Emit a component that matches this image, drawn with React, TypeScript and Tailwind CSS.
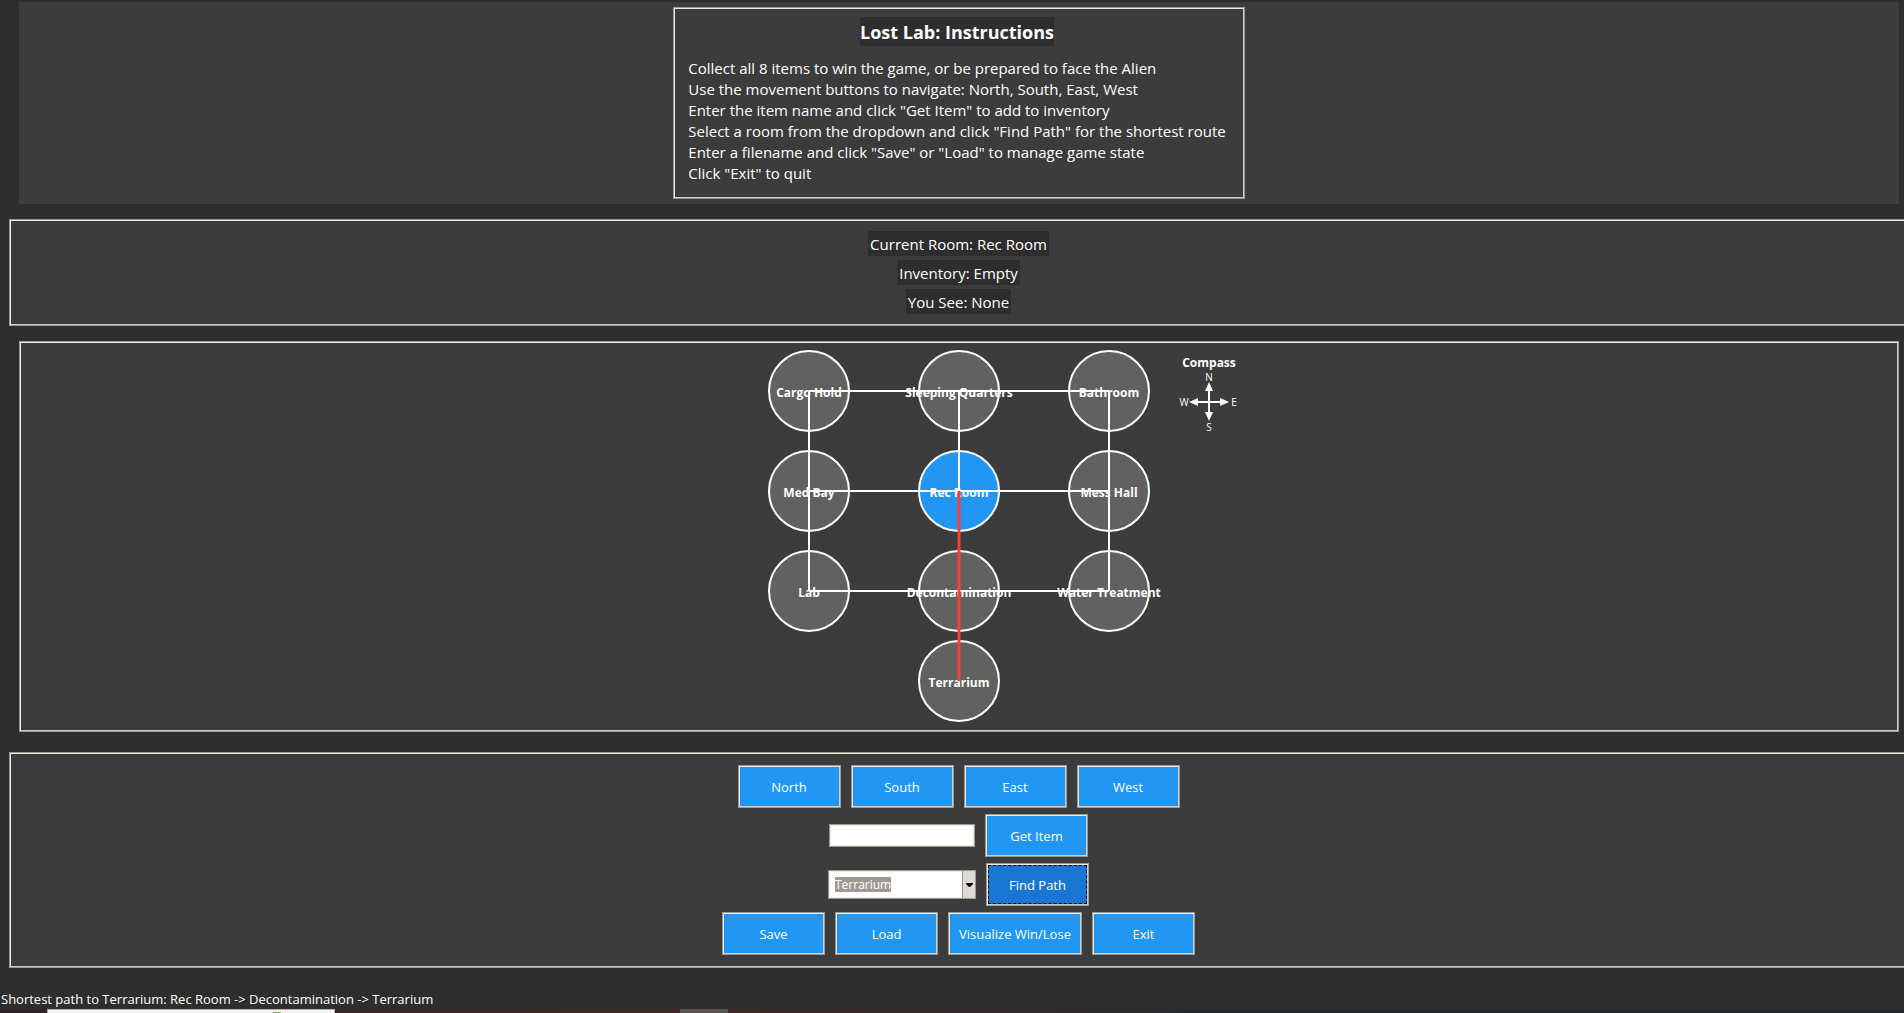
import type { ReactNode } from "react";

const INSTRUCTIONS = [
  "Collect all 8 items to win the game, or be prepared to face the Alien",
  "Use the movement buttons to navigate: North, South, East, West",
  'Enter the item name and click "Get Item" to add to inventory',
  'Select a room from the dropdown and click "Find Path" for the shortest route',
  'Enter a filename and click "Save" or "Load" to manage game state',
  'Click "Exit" to quit',
];

const STATUS = ["Current Room: Rec Room", "Inventory: Empty", "You See: None"];

const ROOMS = [
  { name: "Cargo Hold", x: 130, y: 48 },
  { name: "Sleeping Quarters", x: 280, y: 48 },
  { name: "Bathroom", x: 430, y: 48 },
  { name: "Med Bay", x: 130, y: 148 },
  { name: "Rec Room", x: 280, y: 148, current: true },
  { name: "Mess Hall", x: 430, y: 148 },
  { name: "Lab", x: 130, y: 248 },
  { name: "Decontamination", x: 280, y: 248 },
  { name: "Water Treatment", x: 430, y: 248 },
  { name: "Terrarium", x: 280, y: 338 },
];

const BEVEL =
  "border border-[#9e9a91] shadow-[inset_1px_1px_0_#eeebe7,inset_-1px_-1px_0_#cfcdc8]";

function GameButton({ children, focused = false }: { children: ReactNode; focused?: boolean }) {
  return (
    <button
      type="button"
      className={
        BEVEL +
        " h-[43px] min-w-[103px] px-[10px] text-[13px] leading-5 text-white " +
        (focused
          ? "bg-[#1976d2] outline-1 -outline-offset-3 outline-dashed outline-black"
          : "bg-[#2196f3]")
      }
    >
      {children}
    </button>
  );
}

function ShipMap() {
  return (
    <svg width="560" height="387" viewBox="0 0 560 387" className="shrink-0" role="img" aria-label="Ship map">
      <g stroke="#fff" strokeWidth="2">
        {ROOMS.map((r) => (
          <circle key={r.name} cx={r.x} cy={r.y} r="40" fill={r.current ? "#2196f3" : "#616161"} />
        ))}
      </g>
      <g fill="#fff" textAnchor="middle" className="text-[12px] font-bold">
        {ROOMS.map((r) => (
          <text key={r.name} x={r.x} y={r.y + 6}>
            {r.name}
          </text>
        ))}
        <text x="530" y="24">
          Compass
        </text>
      </g>
      <path
        d="M130 48H430M130 148H430M130 248H430M130 48V248M280 48V338M430 48V248"
        fill="none"
        stroke="#fff"
        strokeWidth="2"
      />
      <path d="M280 148V338" stroke="#f44336" strokeWidth="3" />
      <path d="M530 44V73M516 59H544" stroke="#fff" strokeWidth="2" />
      <path
        d="M530 39L534 48H526ZM530 78L534 69H526ZM510 59L519 55V63ZM550 59L541 55V63Z"
        fill="#fff"
      />
      <g fill="#fff" textAnchor="middle" className="text-[10px]">
        <text x="530" y="38">N</text>
        <text x="530" y="88">S</text>
        <text x="505" y="63">W</text>
        <text x="555" y="63">E</text>
      </g>
    </svg>
  );
}

export default function App() {
  return (
    <div className="flex min-h-screen flex-col overflow-hidden bg-[#2e2e2e] pt-[2px] font-['Open_Sans',sans-serif] text-white">
      <section className="mr-[5px] ml-[19px] flex justify-center bg-[#3c3c3c] py-[5px]">
        <div className={BEVEL + " flex flex-col items-center pt-[9px] pr-[18px] pb-[14px] pl-[14px]"}>
          <h1 className="bg-[#2e2e2e] pt-px text-[18px] leading-7 font-bold">Lost Lab: Instructions</h1>
          <div className="mt-3 self-stretch text-[15px] leading-[21px]">
            {INSTRUCTIONS.map((line) => (
              <p key={line}>{line}</p>
            ))}
          </div>
        </div>
      </section>

      <section
        className={BEVEL + " -mr-[4px] ml-[9px] mt-[15px] flex flex-col items-center gap-1 bg-[#3c3c3c] py-[11px]"}
      >
        {STATUS.map((line) => (
          <p key={line} className="bg-[#2e2e2e] px-[2px] pt-px text-[15px] leading-6">
            {line}
          </p>
        ))}
      </section>

      <section className={BEVEL + " mr-[5px] ml-[19px] mt-[15px] flex justify-center bg-[#3c3c3c] py-px"}>
        <ShipMap />
      </section>

      <section
        className={BEVEL + " -mr-[4px] ml-[9px] mt-5 flex flex-col items-center gap-[6px] bg-[#3c3c3c] py-3"}
      >
        <div className="flex gap-[10px]">
          <GameButton>North</GameButton>
          <GameButton>South</GameButton>
          <GameButton>East</GameButton>
          <GameButton>West</GameButton>
        </div>
        <div className="flex items-center gap-[10px]">
          <input
            type="text"
            aria-label="Item name"
            className="h-[23px] w-[146px] border border-[#9e9a91] bg-white px-1 text-[12px] text-black shadow-[inset_0_0_0_1px_#eeebe7]"
          />
          <GameButton>Get Item</GameButton>
        </div>
        <div className="flex items-center gap-[10px]">
          <div className="relative">
            <select
              aria-label="Destination room"
              defaultValue="Terrarium"
              className="block h-[29px] w-[148px] appearance-none border border-[#9e9a91] bg-white bg-[linear-gradient(#9e9a91,#9e9a91)] bg-[length:56px_15px] bg-[position:6px_6px] bg-no-repeat pr-4 pl-[6px] text-[12px] leading-[15px] text-white shadow-[inset_0_0_0_1px_#eeebe7]"
            >
              {ROOMS.map((r) => (
                <option key={r.name} className="bg-white text-black">
                  {r.name}
                </option>
              ))}
            </select>
            <span className="pointer-events-none absolute inset-y-px right-px flex w-[13px] items-center justify-center border-l border-[#9e9a91] bg-[#dcdad5]">
              <svg width="7" height="4" viewBox="0 0 7 4">
                <path d="M0 0H7V1L4 4H3L0 1Z" fill="#000" />
              </svg>
            </span>
          </div>
          <GameButton focused>Find Path</GameButton>
        </div>
        <div className="flex gap-[10px]">
          <GameButton>Save</GameButton>
          <GameButton>Load</GameButton>
          <GameButton>Visualize Win/Lose</GameButton>
          <GameButton>Exit</GameButton>
        </div>
      </section>

      <p className="mt-[21px] px-px text-[13px] leading-5" role="status">
        Shortest path to Terrarium: Rec Room -&gt; Decontamination -&gt; Terrarium
      </p>

      <div className="mt-auto flex h-1 bg-linear-to-r from-[#2f2429] via-[#432828] via-35% to-[#23292c] to-65%">
        <div className="ml-[47px] flex w-[288px] items-end border border-b-0 border-[#b5b0b0] bg-[#f3f3f3] pl-[225px]">
          <span className="h-px w-2 bg-[#7cb342]" />
        </div>
        <div className="ml-[345px] w-12 bg-[#5b5352]" />
      </div>
    </div>
  );
}
